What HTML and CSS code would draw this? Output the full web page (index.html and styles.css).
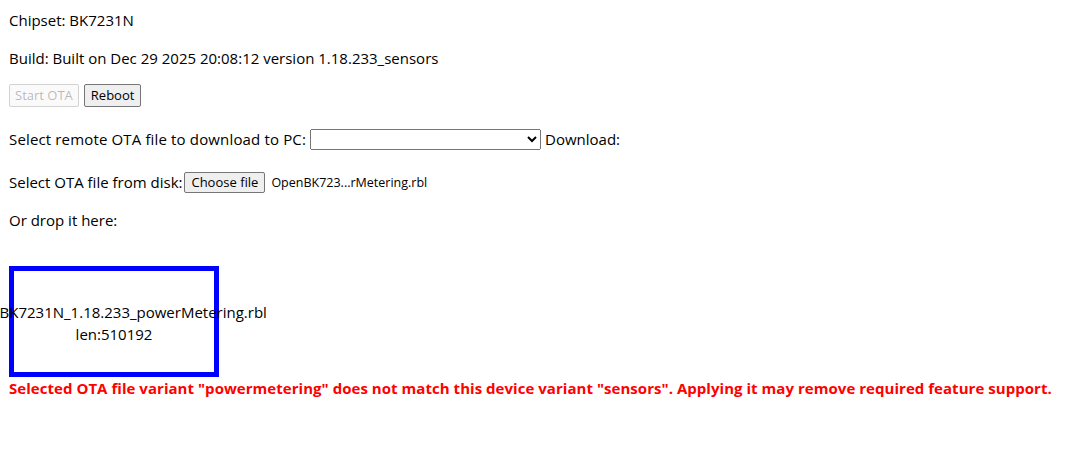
FILE: index.html
```html
<!DOCTYPE html>
<html>
<head>
<meta charset="utf-8">
<link rel="stylesheet" href="styles.css">
</head>
<body>
<p class="line first">Chipset: BK7231N</p>
<p class="line build">Build: Built on Dec 29 2025 20:08:12 version 1.18.233_sensors</p>
<div class="buttons">
  <button class="btn start" disabled>Start OTA</button>
  <button class="btn">Reboot</button>
</div>
<div class="row remote">
  <span class="remote-label">Select remote OTA file to download to PC:</span>
  <select class="sel"><option></option></select>
  <span>Download:</span>
</div>
<div class="row disk">
  <span class="disk-label">Select OTA file from disk:</span>
  <button class="btn choose">Choose file</button>
  <span class="fname">OpenBK723...rMetering.rbl</span>
</div>
<p class="line drop-label">Or drop it here:</p>
<div class="dropzone">
  <div class="dz-name">OpenBK7231N_1.18.233_powerMetering.rbl</div>
  <div class="dz-len">len:510192</div>
</div>
<p class="warn">Selected OTA file variant "powermetering" does not match this device variant "sensors". Applying it may remove required feature support.</p>
</body>
</html>
```
FILE: styles.css
```css
html, body {
  background: #ffffff;
}
body {
  margin: 0;
  padding: 10px 9px;
  font-family: "Open Sans", "Noto Sans", sans-serif;
  font-size: 15px;
  line-height: 21px;
  color: #000000;
}
.line {
  margin: 0;
}
.build {
  margin-top: 17px;
}
.buttons {
  margin-top: 15px;
  display: flex;
  gap: 5px;
}
.btn {
  font-family: "Open Sans", "Noto Sans", sans-serif;
  font-size: 13px;
  line-height: 17px;
  height: 23px;
  padding: 1px 6px;
  margin: 0;
  border: 1px solid #767676;
  border-radius: 2px;
  background: #efefef;
  color: #000000;
}
.btn.start {
  padding: 1px 5px;
}
.btn:disabled {
  color: rgba(16, 16, 16, 0.3);
  border-color: rgba(118, 118, 118, 0.3);
  background: rgba(239, 239, 239, 0.3);
}
.row {
  display: flex;
  align-items: center;
}
.remote {
  margin-top: 22px;
  height: 21px;
  gap: 4px;
}
.remote-label {
  letter-spacing: 0.15px;
}
.sel {
  width: 231px;
  height: 21px;
  margin: 0;
  font-size: 13px;
}
.disk {
  margin-top: 22px;
  height: 21px;
}
.disk-label {
  margin-right: 2px;
}
.choose {
  height: 21px;
  padding: 0 6px;
  margin-right: 6px;
}
.fname {
  font-size: 12.5px;
}
.drop-label {
  margin-top: 17px;
}
.dropzone {
  margin-top: 35px;
  width: 200px;
  height: 99px;
  padding-top: 2px;
  border: 5px solid #0000ff;
  display: flex;
  flex-direction: column;
  justify-content: center;
  align-items: center;
  text-align: center;
  white-space: nowrap;
  line-height: 22px;
}
.warn {
  margin: 1px 0 0;
  color: #ff0000;
  font-weight: bold;
  letter-spacing: 0.04px;
}
```
